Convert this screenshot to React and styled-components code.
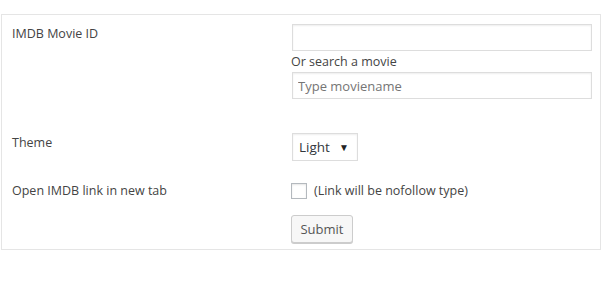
import React from 'react';
import styled, { createGlobalStyle } from 'styled-components';

const GlobalStyle = createGlobalStyle`
  body {
    margin: 0;
    background: #fff;
    font-family: "Open Sans", "Noto Sans", sans-serif;
    font-size: 12.5px;
    color: #444;
  }
`;

const Panel = styled.form`
  margin: 14px 0 0 1px;
  width: 600px;
  box-sizing: border-box;
  border: 1px solid #e5e5e5;
  background: #fff;
  padding: 9px 0 6px;
`;

const Row = styled.div`
  display: grid;
  grid-template-columns: 290px 1fr;
  margin-top: ${({ gap }) => gap || 0}px;
`;

const Label = styled.label`
  padding-left: 10px;
  padding-top: ${({ top }) => top || 0}px;
  line-height: 18px;
  color: #444;
`;

const Field = styled.div`
  display: flex;
  flex-direction: column;
  align-items: flex-start;
`;

const TextInput = styled.input`
  box-sizing: border-box;
  width: 300px;
  height: 27px;
  border: 1px solid #ddd;
  box-shadow: inset 0 1px 2px rgba(0, 0, 0, 0.07);
  padding: 0 5px;
  font: inherit;
  font-size: 13px;
  color: #444;
  outline: none;
  ::placeholder {
    color: #72777c;
    opacity: 1;
  }
`;

const Hint = styled.span`
  margin: 2px 0 1px -1px;
  line-height: 18px;
  color: #444;
`;

const SelectWrap = styled.div`
  position: relative;
  &::after {
    content: '▼';
    position: absolute;
    right: 9px;
    top: 7px;
    font-size: 10px;
    color: #222;
    pointer-events: none;
  }
`;

const Select = styled.select`
  appearance: none;
  box-sizing: border-box;
  width: 66px;
  height: 28px;
  border: 1px solid #ddd;
  box-shadow: inset 0 1px 2px rgba(0, 0, 0, 0.07);
  background: #fff;
  padding: 0 6px;
  font: inherit;
  font-size: 13.5px;
  color: #32373c;
  outline: none;
`;

const CheckLine = styled.label`
  display: flex;
  align-items: center;
  gap: 7px;
  margin-left: -1px;
  line-height: 18px;
`;

const Box = styled.input`
  appearance: none;
  margin: 0;
  width: 16px;
  height: 16px;
  box-sizing: border-box;
  border: 1px solid #b4b9be;
  box-shadow: inset 0 1px 2px rgba(0, 0, 0, 0.1);
  background: #fff;
`;

const Button = styled.button`
  margin-left: -1px;
  box-sizing: border-box;
  width: 62px;
  height: 28px;
  border: 1px solid #ccc;
  border-radius: 3px;
  background: #f7f7f7;
  box-shadow: 0 1px 0 #ccc;
  font: inherit;
  font-size: 13px;
  color: #555;
  padding: 0;
`;

export default function App() {
  return (
    <>
      <GlobalStyle />
      <Panel onSubmit={(e) => e.preventDefault()}>
        <Row>
          <Label top={1}>IMDB Movie ID</Label>
          <Field>
            <TextInput />
            <Hint>Or search a movie</Hint>
            <TextInput placeholder="Type moviename" />
          </Field>
        </Row>
        <Row gap={34}>
          <Label top={1}>Theme</Label>
          <Field>
            <SelectWrap>
              <Select defaultValue="light">
                <option value="light">Light</option>
                <option value="dark">Dark</option>
              </Select>
            </SelectWrap>
          </Field>
        </Row>
        <Row gap={21}>
          <Label top={0}>Open IMDB link in new tab</Label>
          <Field>
            <CheckLine>
              <Box type="checkbox" />
              (Link will be nofollow type)
            </CheckLine>
          </Field>
        </Row>
        <Row gap={15}>
          <span />
          <Field>
            <Button type="submit">Submit</Button>
          </Field>
        </Row>
      </Panel>
    </>
  );
}
